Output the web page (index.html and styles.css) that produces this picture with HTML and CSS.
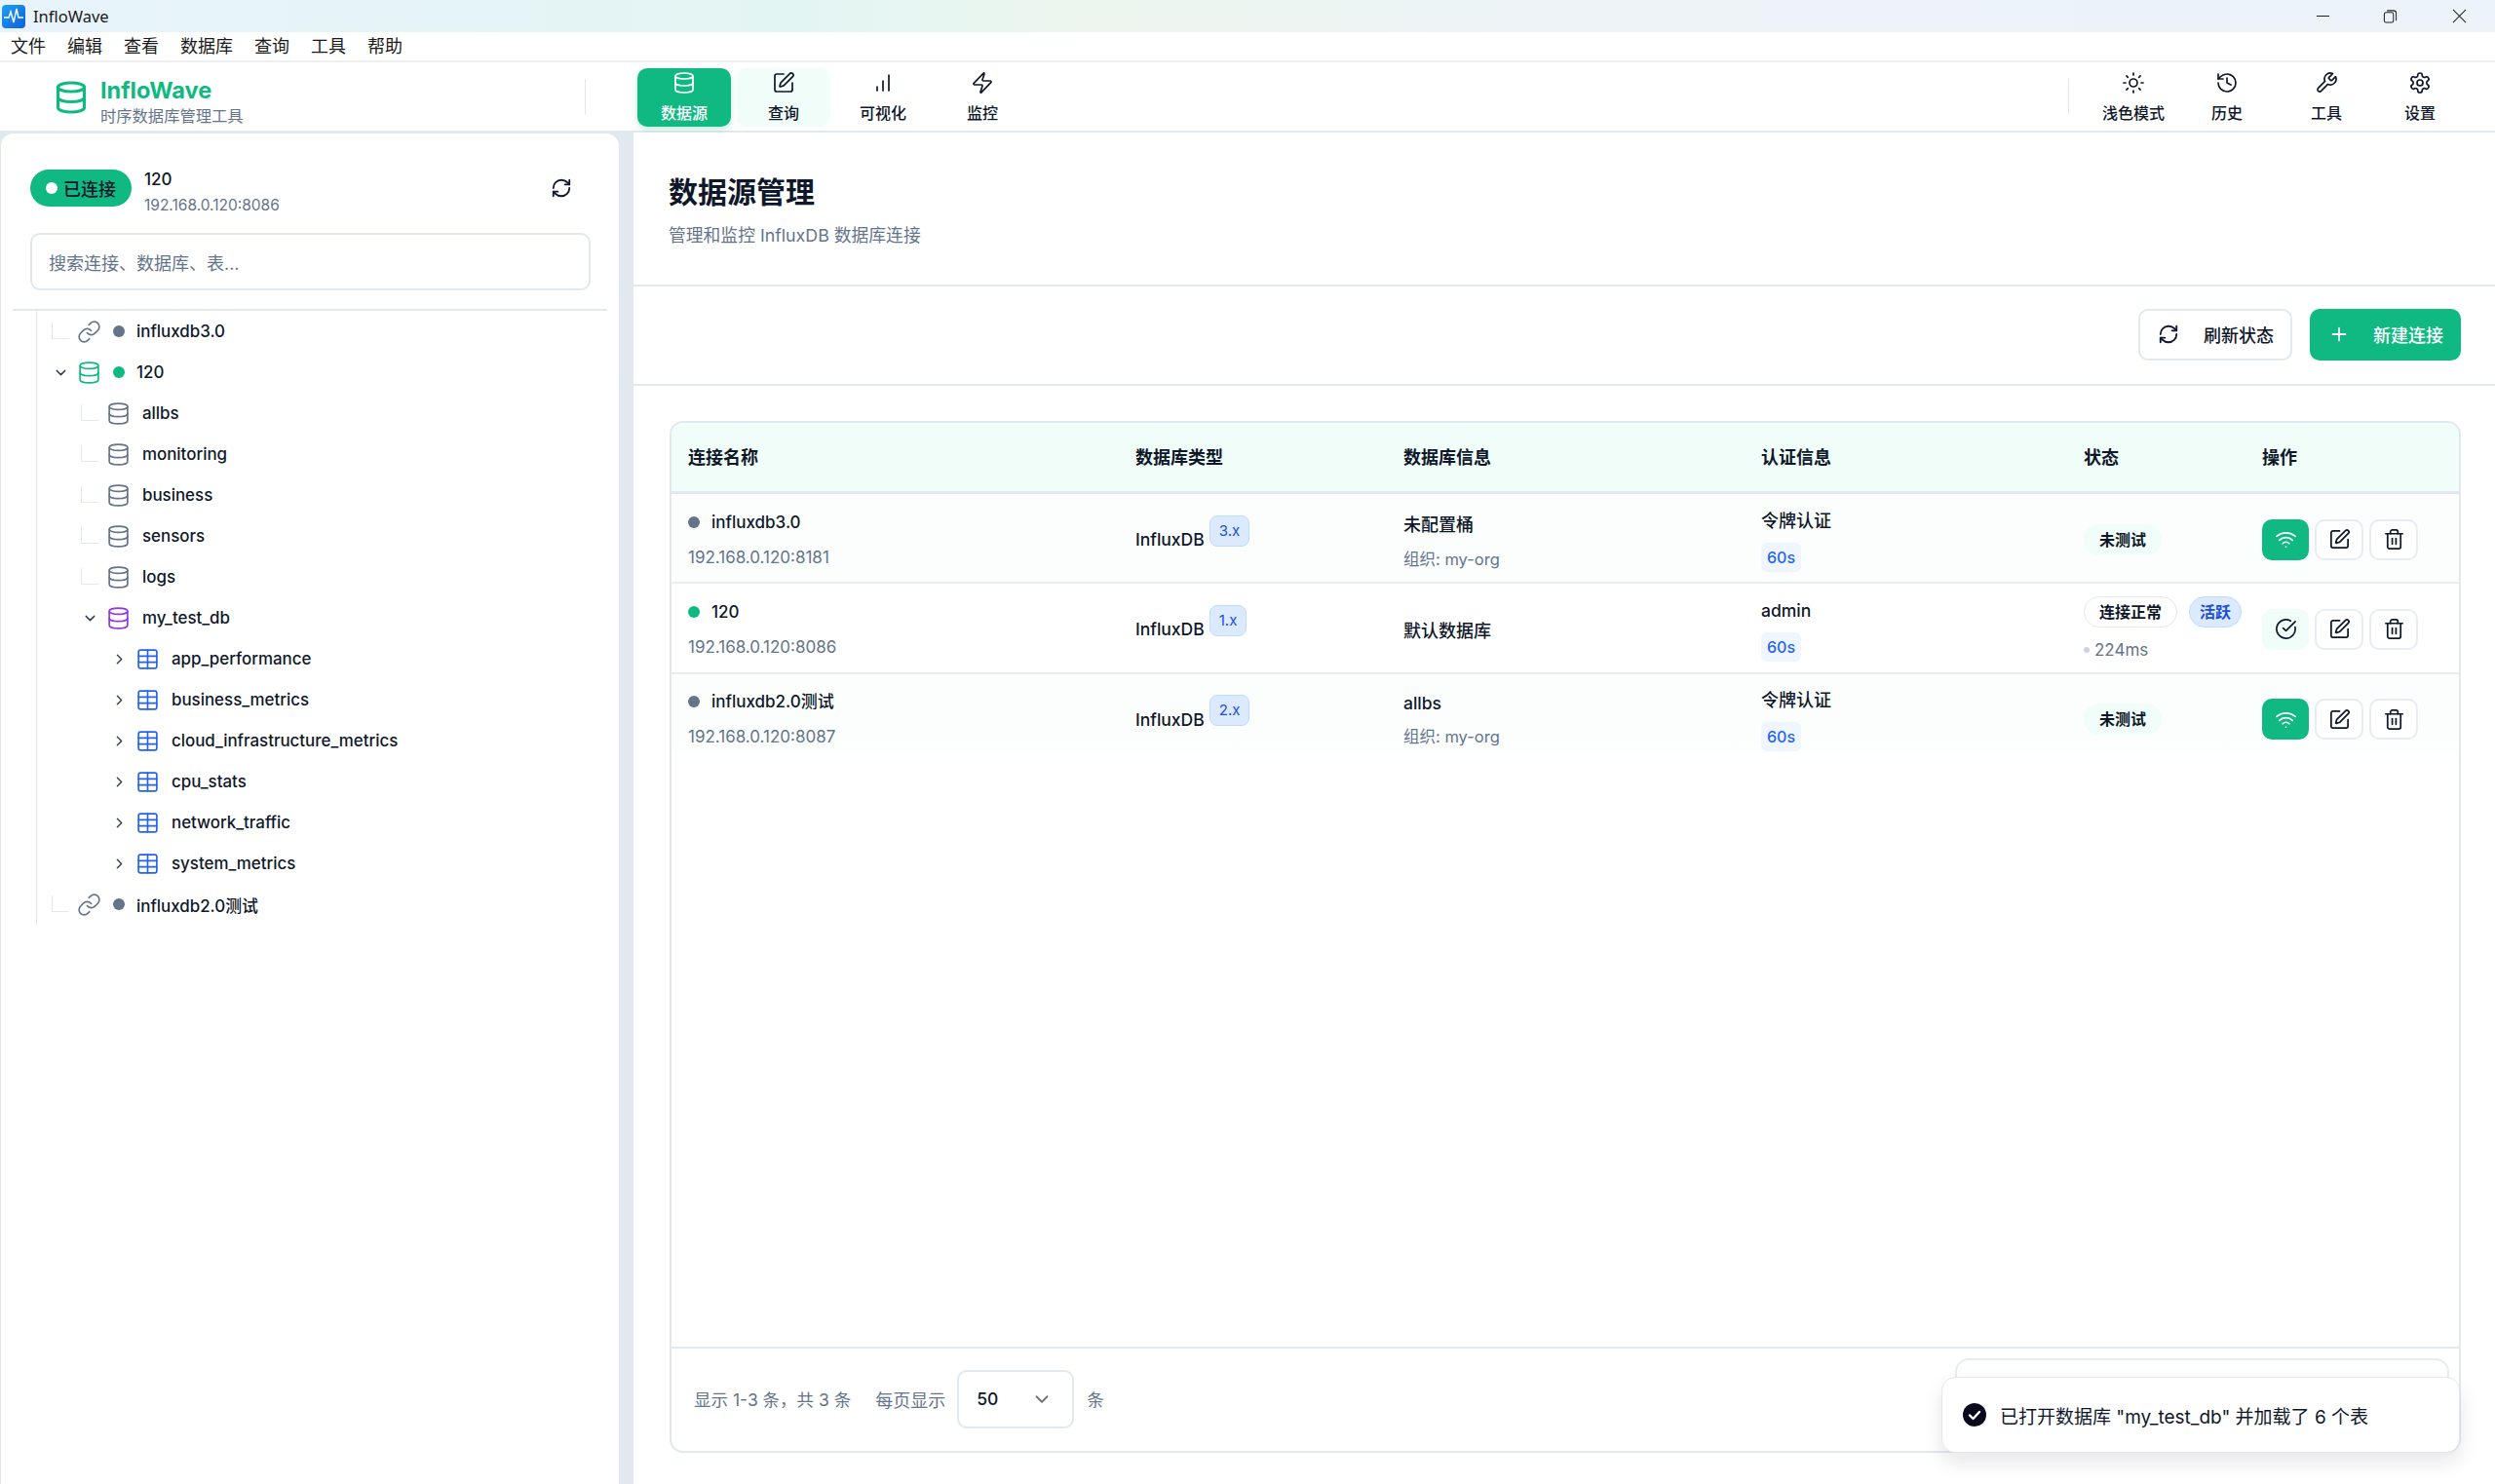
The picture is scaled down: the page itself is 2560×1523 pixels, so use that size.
FILE: index.html
```html
<!DOCTYPE html>
<html lang="en">
<head>
<meta charset="UTF-8">
<meta name="viewport" content="width=device-width, initial-scale=1.0">
<title>InfloWave</title>
<link rel="stylesheet" href="styles.css">
</head>
<body>
  <!-- icon sprites -->
  <svg class="sprites" aria-hidden="true">
    <symbol id="i-db" viewBox="0 0 24 24"><ellipse cx="12" cy="5" rx="9" ry="3"/><path d="M3 5v14a9 3 0 0 0 18 0V5"/><path d="M3 12a9 3 0 0 0 18 0"/></symbol>
    <symbol id="i-edit" viewBox="0 0 24 24"><path d="M12 3H5a2 2 0 0 0-2 2v14a2 2 0 0 0 2 2h14a2 2 0 0 0 2-2v-7"/><path d="M18.375 2.625a1 1 0 0 1 3 3l-9.013 9.014a2 2 0 0 1-.853.505l-2.873.84a.5.5 0 0 1-.62-.62l.84-2.873a2 2 0 0 1 .506-.852z"/></symbol>
    <symbol id="i-bars" viewBox="0 0 24 24"><path d="M12 20v-10"/><path d="M18 20V4"/><path d="M6 20v-4"/></symbol>
    <symbol id="i-zap" viewBox="0 0 24 24"><path d="M4 14a1 1 0 0 1-.78-1.63l9.9-10.2a.5.5 0 0 1 .86.46l-1.92 6.02A1 1 0 0 0 13 10h7a1 1 0 0 1 .78 1.63l-9.9 10.2a.5.5 0 0 1-.86-.46l1.92-6.02A1 1 0 0 0 11 14z"/></symbol>
    <symbol id="i-sun" viewBox="0 0 24 24"><circle cx="12" cy="12" r="4"/><path d="M12 2v2M12 20v2M4.93 4.93l1.41 1.41M17.66 17.66l1.41 1.41M2 12h2M20 12h2M6.34 17.66l-1.41 1.41M19.07 4.93l-1.41 1.41"/></symbol>
    <symbol id="i-history" viewBox="0 0 24 24"><path d="M3 12a9 9 0 1 0 9-9 9.75 9.75 0 0 0-6.74 2.74L3 8"/><path d="M3 3v5h5"/><path d="M12 7v5l4 2"/></symbol>
    <symbol id="i-wrench" viewBox="0 0 24 24"><path d="M14.7 6.3a1 1 0 0 0 0 1.4l1.6 1.6a1 1 0 0 0 1.4 0l3.77-3.77a6 6 0 0 1-7.94 7.94l-6.91 6.91a2.12 2.12 0 0 1-3-3l6.91-6.91a6 6 0 0 1 7.94-7.94l-3.76 3.76z"/></symbol>
    <symbol id="i-gear" viewBox="0 0 24 24"><path d="M12.22 2h-.44a2 2 0 0 0-2 2v.18a2 2 0 0 1-1 1.73l-.43.25a2 2 0 0 1-2 0l-.15-.08a2 2 0 0 0-2.73.73l-.22.38a2 2 0 0 0 .73 2.73l.15.1a2 2 0 0 1 1 1.72v.51a2 2 0 0 1-1 1.74l-.15.09a2 2 0 0 0-.73 2.73l.22.38a2 2 0 0 0 2.73.73l.15-.08a2 2 0 0 1 2 0l.43.25a2 2 0 0 1 1 1.73V20a2 2 0 0 0 2 2h.44a2 2 0 0 0 2-2v-.18a2 2 0 0 1 1-1.73l.43-.25a2 2 0 0 1 2 0l.15.08a2 2 0 0 0 2.73-.73l.22-.39a2 2 0 0 0-.73-2.73l-.15-.08a2 2 0 0 1-1-1.74v-.5a2 2 0 0 1 1-1.74l.15-.09a2 2 0 0 0 .73-2.73l-.22-.38a2 2 0 0 0-2.73-.73l-.15.08a2 2 0 0 1-2 0l-.43-.25a2 2 0 0 1-1-1.73V4a2 2 0 0 0-2-2z"/><circle cx="12" cy="12" r="3"/></symbol>
    <symbol id="i-refresh" viewBox="0 0 24 24"><path d="M3 12a9 9 0 0 1 9-9 9.75 9.75 0 0 1 6.74 2.74L21 8"/><path d="M21 3v5h-5"/><path d="M21 12a9 9 0 0 1-9 9 9.75 9.75 0 0 1-6.74-2.74L3 16"/><path d="M8 16H3v5"/></symbol>
    <symbol id="i-wifi" viewBox="0 0 24 24"><path d="M12 20h.01"/><path d="M2 8.82a15 15 0 0 1 20 0"/><path d="M5 12.859a10 10 0 0 1 14 0"/><path d="M8.5 16.429a5 5 0 0 1 7 0"/></symbol>
    <symbol id="i-trash" viewBox="0 0 24 24"><path d="M3 6h18"/><path d="M19 6v14c0 1-1 2-2 2H7c-1 0-2-1-2-2V6"/><path d="M8 6V4c0-1 1-2 2-2h4c1 0 2 1 2 2v2"/><path d="M10 11v6"/><path d="M14 11v6"/></symbol>
    <symbol id="i-check" viewBox="0 0 24 24"><path d="M21.801 10A10 10 0 1 1 17 3.335"/><path d="m9 11 3 3L22 4"/></symbol>
    <symbol id="i-link" viewBox="0 0 24 24"><path d="M10 13a5 5 0 0 0 7.54.54l3-3a5 5 0 0 0-7.07-7.07l-1.72 1.71"/><path d="M14 11a5 5 0 0 0-7.54-.54l-3 3a5 5 0 0 0 7.07 7.07l1.71-1.71"/></symbol>
    <symbol id="i-table" viewBox="0 0 24 24"><rect x="3" y="3" width="18" height="18" rx="2"/><path d="M12 3v18M3 9h18M3 15h18"/></symbol>
    <symbol id="i-plus" viewBox="0 0 24 24"><path d="M5 12h14M12 5v14"/></symbol>
    <symbol id="i-down" viewBox="0 0 24 24"><path d="m6 9 6 6 6-6"/></symbol>
    <symbol id="i-right" viewBox="0 0 24 24"><path d="m9 18 6-6-6-6"/></symbol>
  </svg>

  <!-- Window title bar -->
  <div class="titlebar">
    <div class="app-icon">
      <svg viewBox="0 0 24 24"><path d="M2 13h5l2-6 3 11 3-14 2 9h5"/></svg>
    </div>
    <span class="app-title">InfloWave</span>
    <div class="win-controls">
      <svg class="win-btn" viewBox="0 0 16 16"><path d="M1 8h14"/></svg>
      <svg class="win-btn" viewBox="0 0 16 16"><rect x="1.5" y="4" width="10" height="11" rx="2"/><path d="M4.5 2h7a3 3 0 0 1 3 3v8"/></svg>
      <svg class="win-btn close" viewBox="0 0 16 16"><path d="M1 1l14 14M15 1L1 15"/></svg>
    </div>
  </div>

  <!-- Menu -->
  <div class="menubar">
    <span>文件</span><span>编辑</span><span>查看</span><span>数据库</span><span>查询</span><span>工具</span><span>帮助</span>
  </div>

  <!-- Toolbar -->
  <header class="toolbar">
    <div class="brand">
      <svg class="ic brand-icon"><use href="#i-db"/></svg>
      <div>
        <div class="brand-name">InfloWave</div>
        <div class="brand-sub">时序数据库管理工具</div>
      </div>
    </div>
    <div class="tool-divider"></div>
    <nav class="nav-main">
      <a class="nav-btn active"><svg class="ic"><use href="#i-db"/></svg>数据源</a>
      <a class="nav-btn soft"><svg class="ic"><use href="#i-edit"/></svg>查询</a>
      <a class="nav-btn"><svg class="ic"><use href="#i-bars"/></svg>可视化</a>
      <a class="nav-btn"><svg class="ic"><use href="#i-zap"/></svg>监控</a>
    </nav>
    <div class="tool-divider right"></div>
    <nav class="nav-side">
      <a class="nav-btn"><svg class="ic"><use href="#i-sun"/></svg>浅色模式</a>
      <a class="nav-btn"><svg class="ic"><use href="#i-history"/></svg>历史</a>
      <a class="nav-btn tools"><svg class="ic"><use href="#i-wrench"/></svg>工具</a>
      <a class="nav-btn"><svg class="ic"><use href="#i-gear"/></svg>设置</a>
    </nav>
  </header>

  <div class="workspace">
    <!-- Connection tree -->
    <aside class="sidebar">
      <div class="conn-row">
        <span class="conn-badge"><i></i>已连接</span>
        <div class="conn-meta">
          <div class="conn-name">120</div>
          <div class="conn-addr">192.168.0.120:8086</div>
        </div>
        <svg class="ic conn-refresh"><use href="#i-refresh"/></svg>
      </div>
      <div class="search">搜索连接、数据库、表...</div>

      <div class="tree-wrap">
        <div class="tree">
          <div class="node lv0"><span class="stub"></span><svg class="ic gray"><use href="#i-link"/></svg><i class="dot off"></i><span class="label">influxdb3.0</span></div>
          <div class="node lv0"><span class="toggle"><svg class="ic"><use href="#i-down"/></svg></span><svg class="ic green"><use href="#i-db"/></svg><i class="dot on"></i><span class="label">120</span></div>
          <div class="node lv1"><span class="stub"></span><svg class="ic gray"><use href="#i-db"/></svg><span class="label">allbs</span></div>
          <div class="node lv1"><span class="stub"></span><svg class="ic gray"><use href="#i-db"/></svg><span class="label">monitoring</span></div>
          <div class="node lv1"><span class="stub"></span><svg class="ic gray"><use href="#i-db"/></svg><span class="label">business</span></div>
          <div class="node lv1"><span class="stub"></span><svg class="ic gray"><use href="#i-db"/></svg><span class="label">sensors</span></div>
          <div class="node lv1"><span class="stub"></span><svg class="ic gray"><use href="#i-db"/></svg><span class="label">logs</span></div>
          <div class="node lv1"><span class="toggle"><svg class="ic"><use href="#i-down"/></svg></span><svg class="ic purple"><use href="#i-db"/></svg><span class="label">my_test_db</span></div>
          <div class="node lv2"><span class="toggle"><svg class="ic"><use href="#i-right"/></svg></span><svg class="ic blue"><use href="#i-table"/></svg><span class="label">app_performance</span></div>
          <div class="node lv2"><span class="toggle"><svg class="ic"><use href="#i-right"/></svg></span><svg class="ic blue"><use href="#i-table"/></svg><span class="label">business_metrics</span></div>
          <div class="node lv2"><span class="toggle"><svg class="ic"><use href="#i-right"/></svg></span><svg class="ic blue"><use href="#i-table"/></svg><span class="label">cloud_infrastructure_metrics</span></div>
          <div class="node lv2"><span class="toggle"><svg class="ic"><use href="#i-right"/></svg></span><svg class="ic blue"><use href="#i-table"/></svg><span class="label">cpu_stats</span></div>
          <div class="node lv2"><span class="toggle"><svg class="ic"><use href="#i-right"/></svg></span><svg class="ic blue"><use href="#i-table"/></svg><span class="label">network_traffic</span></div>
          <div class="node lv2"><span class="toggle"><svg class="ic"><use href="#i-right"/></svg></span><svg class="ic blue"><use href="#i-table"/></svg><span class="label">system_metrics</span></div>
          <div class="node lv0"><span class="stub"></span><svg class="ic gray"><use href="#i-link"/></svg><i class="dot off"></i><span class="label">influxdb2.0测试</span></div>
        </div>
      </div>
    </aside>

    <!-- Data source page -->
    <main class="content">
      <div class="page-head">
        <h1>数据源管理</h1>
        <p>管理和监控 InfluxDB 数据库连接</p>
      </div>
      <div class="page-actions">
        <button class="btn"><svg class="ic"><use href="#i-refresh"/></svg>刷新状态</button>
        <button class="btn primary"><svg class="ic"><use href="#i-plus"/></svg>新建连接</button>
      </div>

      <div class="table-area">
        <div class="table-card">
          <div class="grid thead">
            <div class="cell">连接名称</div>
            <div class="cell">数据库类型</div>
            <div class="cell">数据库信息</div>
            <div class="cell">认证信息</div>
            <div class="cell">状态</div>
            <div class="cell">操作</div>
          </div>

          <div class="tbody">
            <div class="grid row tint first">
              <div class="cell stack">
                <div class="name"><i class="dot off"></i>influxdb3.0</div>
                <div class="muted">192.168.0.120:8181</div>
              </div>
              <div class="cell"><div class="db-type">InfluxDB<span class="ver">3.x</span></div></div>
              <div class="cell stack info">
                <div class="zh">未配置桶</div>
                <div class="muted">组织: my-org</div>
              </div>
              <div class="cell stack">
                <div class="auth zh">令牌认证</div>
                <span class="timeout">60s</span>
              </div>
              <div class="cell"><span class="pill soft">未测试</span></div>
              <div class="cell ops">
                <button class="op primary"><svg class="ic"><use href="#i-wifi"/></svg></button>
                <button class="op"><svg class="ic"><use href="#i-edit"/></svg></button>
                <button class="op"><svg class="ic"><use href="#i-trash"/></svg></button>
              </div>
            </div>

            <div class="grid row tall">
              <div class="cell stack">
                <div class="name"><i class="dot on"></i>120</div>
                <div class="muted">192.168.0.120:8086</div>
              </div>
              <div class="cell"><div class="db-type">InfluxDB<span class="ver">1.x</span></div></div>
              <div class="cell zh">默认数据库</div>
              <div class="cell stack">
                <div class="auth">admin</div>
                <span class="timeout">60s</span>
              </div>
              <div class="cell stack status">
                <div class="pills"><span class="pill outline">连接正常</span><span class="pill active">活跃</span></div>
                <div class="latency muted"><i></i>224ms</div>
              </div>
              <div class="cell ops">
                <button class="op mint"><svg class="ic"><use href="#i-check"/></svg></button>
                <button class="op"><svg class="ic"><use href="#i-edit"/></svg></button>
                <button class="op"><svg class="ic"><use href="#i-trash"/></svg></button>
              </div>
            </div>

            <div class="grid row tint fade">
              <div class="cell stack">
                <div class="name"><i class="dot off"></i>influxdb2.0测试</div>
                <div class="muted">192.168.0.120:8087</div>
              </div>
              <div class="cell"><div class="db-type">InfluxDB<span class="ver">2.x</span></div></div>
              <div class="cell stack info">
                <div>allbs</div>
                <div class="muted">组织: my-org</div>
              </div>
              <div class="cell stack">
                <div class="auth zh">令牌认证</div>
                <span class="timeout">60s</span>
              </div>
              <div class="cell"><span class="pill soft">未测试</span></div>
              <div class="cell ops">
                <button class="op primary"><svg class="ic"><use href="#i-wifi"/></svg></button>
                <button class="op"><svg class="ic"><use href="#i-edit"/></svg></button>
                <button class="op"><svg class="ic"><use href="#i-trash"/></svg></button>
              </div>
            </div>
          </div>

          <div class="pager">
            <span>显示 1-3 条，共 3 条</span>
            <span class="per-page">每页显示</span>
            <div class="select">50<svg class="ic"><use href="#i-down"/></svg></div>
            <span>条</span>
            <div class="pager-nav"></div>
          </div>
        </div>
      </div>
    </main>
  </div>

  <!-- Toast -->
  <div class="toast">
    <svg class="toast-icon" viewBox="0 0 24 24"><circle cx="12" cy="12" r="12"/><path d="m7 12.5 3.5 3.5L17 9"/></svg>
    已打开数据库 "my_test_db" 并加载了 6 个表
  </div>
</body>
</html>
```

FILE: styles.css
```css
* {
  box-sizing: border-box;
}

body {
  margin: 0;
  height: 1523px;
  overflow: hidden;
  position: relative;
  font-family: Inter, "Noto Sans CJK SC", sans-serif;
  font-size: 17.5px;
  color: #0f172a;
  background: #fff;
}

.sprites {
  display: none;
}

.ic {
  display: block;
  width: 22px;
  height: 22px;
  fill: none;
  stroke: currentColor;
  stroke-width: 2;
  stroke-linecap: round;
  stroke-linejoin: round;
  flex: none;
}

/* title bar */
.titlebar {
  height: 33px;
  display: flex;
  align-items: center;
  background: linear-gradient(90deg, #e8f3fb 0%, #e3f5f3 32%, #ecf6ee 44%, #edf3f7 62%, #ecf3f9 100%);
}

.app-icon {
  width: 24px;
  height: 24px;
  margin-left: 2px;
  border-radius: 4px;
  background: linear-gradient(135deg, #1ea0f5, #0b62d8);
}

.app-icon svg {
  width: 24px;
  height: 24px;
  fill: none;
  stroke: #fff;
  stroke-width: 1.4;
}

.app-title {
  margin-left: 8px;
  font-family: "Noto Sans", sans-serif;
  font-size: 16.5px;
  color: #1a1a1a;
}

.win-controls {
  margin-left: auto;
  display: flex;
  gap: 54px;
  margin-right: 29px;
}

.win-btn {
  width: 15px;
  height: 15px;
  fill: none;
  stroke: #222;
  stroke-width: 1.1;
}

.win-btn.close {
  margin-left: 2px;
}

/* menu */
.menubar {
  height: 31px;
  padding: 0 0 3px 11px;
  display: flex;
  gap: 22px;
  align-items: center;
  font-size: 18px;
  color: #1a1a1a;
  border-bottom: 2px solid #f0f0f0;
}

/* toolbar */
.toolbar {
  height: 72px;
  padding-top: 2px;
  display: flex;
  align-items: center;
  border-bottom: 2px solid #e2e8f0;
}

.brand {
  width: 600px;
  padding-left: 55px;
  display: flex;
  align-items: center;
  gap: 12px;
}

.brand-icon {
  width: 36px;
  height: 36px;
  color: #10b981;
  stroke-width: 2.1;
}

.brand-name {
  margin-top: 8px;
  font-size: 23.5px;
  font-weight: 700;
  line-height: 30px;
  color: #10b981;
}

.brand-sub {
  font-size: 16.3px;
  line-height: 22px;
  color: #64748b;
}

.tool-divider {
  width: 1px;
  height: 36px;
  margin-bottom: 2px;
  background: #e2e8f0;
}

.tool-divider.right {
  margin-left: auto;
}

.nav-main {
  margin-left: 53px;
  display: flex;
  gap: 6px;
}

.nav-side {
  margin-left: 18px;
  margin-right: 29px;
  display: flex;
}

.nav-btn {
  width: 96px;
  height: 60px;
  padding-top: 3px;
  border-radius: 10px;
  display: flex;
  flex-direction: column;
  align-items: center;
  gap: 8px;
  font-size: 16px;
  font-weight: 500;
  line-height: 22px;
  color: #0f172a;
}

.nav-btn .ic {
  width: 24px;
  height: 24px;
  stroke-width: 1.7;
}

.nav-btn.active {
  background: #10b981;
  color: #fff;
  box-shadow: 0 3px 6px rgba(16, 185, 129, 0.25);
}

.nav-btn.soft {
  background: #f0fdf8;
}

.nav-btn.tools {
  margin-left: 6px;
}

/* main layout */
.workspace {
  height: 1387px;
  display: flex;
  background: #e2e8f0;
}

.sidebar {
  width: 636px;
  background: #fff;
  border: 1px solid #e2e8f0;
  border-bottom: 0;
  border-radius: 14px 14px 0 0;
  padding-top: 32px;
}

.conn-row {
  height: 52px;
  margin: 0 30px 0 30px;
  display: flex;
  align-items: center;
}

.conn-badge {
  width: 104px;
  height: 38px;
  margin-bottom: 4px;
  border-radius: 19px;
  background: #10b981;
  color: #0f172a;
  font-size: 18px;
  font-weight: 500;
  display: flex;
  align-items: center;
  justify-content: center;
  gap: 6px;
}

.conn-badge i {
  width: 12px;
  height: 12px;
  border-radius: 50%;
  background: #fff;
}

.conn-meta {
  margin-top: 4px;
  margin-left: 13px;
}

.conn-name {
  font-size: 17px;
  font-weight: 500;
  line-height: 26px;
}

.conn-addr {
  margin-top: 1px;
  font-size: 15.5px;
  line-height: 26px;
  color: #64748b;
}

.conn-refresh {
  margin-left: auto;
  margin-right: 18px;
  margin-bottom: 4px;
}

.search {
  height: 59px;
  margin: 18px 29px 0 30px;
  padding-left: 17px;
  border: 2px solid #e2e8f0;
  border-radius: 10px;
  display: flex;
  align-items: center;
  font-size: 18px;
  color: #64748b;
}

.tree-wrap {
  margin: 19px 12px 0 12px;
  border-top: 2px solid #e2e8f0;
  padding-left: 24px;
}

.tree {
  border-left: 1px solid #e2e8f0;
}

.node {
  height: 42px;
  display: flex;
  align-items: center;
  gap: 10px;
  font-weight: 500;
  font-size: 16.9px;
}

.lv0 {
  padding-left: 15px;
}

.lv1 {
  padding-left: 45px;
}

.lv2 {
  padding-left: 75px;
}

.node .label {
  margin-left: 4px;
}

.lv0 .label {
  margin-left: 2px;
}

.stub {
  width: 18px;
  height: 17px;
  align-self: flex-start;
  margin-top: 12px;
  border-left: 1px solid #e2e8f0;
  border-bottom: 1px solid #e2e8f0;
}

.toggle {
  width: 18px;
  display: flex;
  justify-content: center;
  color: #334155;
}

.toggle .ic {
  width: 17px;
  height: 17px;
}

.node > .ic {
  width: 25px;
  height: 25px;
  margin: 0 -2px;
  stroke-width: 1.6;
}

.gray {
  color: #64748b;
}

.green {
  color: #10b981;
}

.purple {
  color: #9333ea;
}

.blue {
  color: #2563eb;
}

.dot {
  width: 12px;
  height: 12px;
  border-radius: 50%;
  flex: none;
  display: block;
}

.node .dot {
  margin-left: 4px;
}

.dot.off {
  background: #64748b;
}

.dot.on {
  background: #10b981;
}

/* content */
.content {
  flex: 1;
  margin-left: 14px;
  background: #fff;
  display: flex;
  flex-direction: column;
  position: relative;
}

.page-head {
  height: 158px;
  padding: 40px 0 0 36px;
  border-bottom: 2px solid #e2e8f0;
}

.page-head h1 {
  margin: 0;
  font-size: 30px;
  font-weight: 700;
  line-height: 42px;
}

.page-head p {
  margin: 11px 0 0;
  font-size: 17.8px;
  line-height: 26px;
  color: #64748b;
}

.page-actions {
  height: 102px;
  padding: 0 35px 2px 0;
  border-bottom: 2px solid #e2e8f0;
  display: flex;
  align-items: center;
  justify-content: flex-end;
  gap: 18px;
}

.btn {
  width: 158px;
  height: 53px;
  padding: 0 17px 0 18px;
  border: 2px solid #e2e8f0;
  border-radius: 10px;
  background: #fff;
  font: inherit;
  font-size: 18px;
  font-weight: 500;
  color: #0f172a;
  display: flex;
  align-items: center;
  justify-content: space-between;
}

.btn.primary {
  width: 155px;
  padding: 0 16px 0 17px;
  border-color: #10b981;
  background: #10b981;
  color: #fff;
}

.table-area {
  flex: 1;
  padding: 36px 35px 32px 37px;
  display: flex;
}

.table-card {
  flex: 1;
  border: 2px solid #e2e8f0;
  border-radius: 14px;
  display: flex;
  flex-direction: column;
  overflow: hidden;
}

.grid {
  display: grid;
  grid-template-columns: 457px 275px 367px 331px 183px 1fr;
  align-items: center;
}

.cell {
  padding-left: 19px;
}

.cell:first-child {
  padding-left: 17px;
}

.thead {
  height: 73px;
  padding-bottom: 3px;
  background: #f0fdf8;
  border-bottom: 3px solid #e2e8f0;
  font-size: 18px;
  font-weight: 700;
}

.tbody {
  flex: 1;
}

.row {
  height: 92px;
  border-bottom: 2px solid #e8edf4;
  font-weight: 500;
}

.row.first {
  padding-top: 3px;
}

.row.tall {
  height: 93px;
  padding-top: 2px;
}

.row.tint {
  background: #fbfefd;
}

.row.fade {
  border-bottom: 0;
  background: linear-gradient(#fbfefd 70%, #fff);
}

.zh {
  font-size: 18px;
}

.stack {
  display: flex;
  flex-direction: column;
  align-items: flex-start;
  gap: 8px;
}

.stack.info {
  padding-top: 5px;
  gap: 10px;
}

.name {
  display: flex;
  align-items: center;
  gap: 12px;
  font-size: 17px;
  line-height: 28px;
}

.muted {
  font-size: 17px;
  font-weight: 400;
  line-height: 28px;
  color: #64748b;
}

.info .muted {
  font-size: 16.5px;
}

.db-type {
  display: flex;
  align-items: center;
  gap: 5px;
}

.ver {
  height: 32px;
  padding: 0 9px;
  margin-bottom: 18px;
  border: 1px solid #bfdbfe;
  border-radius: 8px;
  background: #dbeafe;
  color: #1d4ed8;
  font-size: 15px;
  font-weight: 400;
  line-height: 30px;
}

.auth {
  line-height: 28px;
}

.timeout {
  height: 30px;
  padding: 0 6px;
  border-radius: 6px;
  background: #eff6ff;
  color: #2563eb;
  font-size: 16px;
  line-height: 30px;
}

.pills {
  display: flex;
  gap: 12px;
}

.pill {
  height: 32px;
  padding: 0 15px;
  border-radius: 16px;
  font-size: 16px;
  font-weight: 600;
  line-height: 30px;
  display: inline-block;
  border: 1px solid transparent;
}

.pill.soft {
  background: #f0fdf8;
}

.pill.outline {
  border-color: #e2e8f0;
  background: #fff;
}

.pill.active {
  padding: 0 10px;
  border-color: #bfdbfe;
  background: #dbeafe;
  color: #1d4ed8;
}

.stack.status {
  gap: 10px;
}

.latency {
  display: flex;
  align-items: center;
  gap: 5px;
  line-height: 26px;
}

.latency i {
  width: 6px;
  height: 6px;
  border-radius: 50%;
  background: #cbd5e1;
}

.ops {
  display: flex;
  gap: 6px;
}

.op {
  width: 50px;
  height: 42px;
  padding: 0;
  border: 2px solid #e8edf4;
  border-radius: 10px;
  background: #fff;
  color: #0f172a;
  display: flex;
  align-items: center;
  justify-content: center;
}

.op .ic {
  width: 23px;
  height: 23px;
  stroke-width: 1.8;
}

.op.primary {
  width: 48px;
  border-color: #10b981;
  background: #10b981;
  color: #fff;
}

.op.mint {
  width: 48px;
  border-color: #f0fdf8;
  background: #f0fdf8;
}

.pager {
  height: 107px;
  padding: 0 10px 2px 23px;
  border-top: 2px solid #e2e8f0;
  display: flex;
  align-items: center;
  font-size: 17.5px;
  color: #64748b;
}

.per-page {
  margin-left: 25px;
  font-size: 18px;
}

.select {
  width: 120px;
  height: 60px;
  margin: 0 13px 0 12px;
  padding: 0 20px 0 18px;
  border: 2px solid #e2e8f0;
  border-radius: 10px;
  display: flex;
  align-items: center;
  justify-content: space-between;
  color: #0f172a;
  font-weight: 500;
}

.select .ic {
  color: #71717a;
}

.pager-nav {
  margin-left: auto;
  width: 507px;
  height: 84px;
  border: 2px solid #e8edf4;
  border-radius: 14px;
}

/* toast */
.toast {
  position: absolute;
  right: 36px;
  bottom: 32px;
  width: 532px;
  height: 78px;
  padding-left: 21px;
  border: 1px solid #e2e8f0;
  border-radius: 14px;
  background: #fff;
  box-shadow: 0 10px 20px rgba(15, 23, 42, 0.1);
  display: flex;
  align-items: center;
  gap: 14px;
  font-size: 19px;
  font-weight: 400;
}

.toast-icon {
  width: 24px;
  height: 24px;
}

.toast-icon circle {
  fill: #0a0a1e;
}

.toast-icon path {
  fill: none;
  stroke: #fff;
  stroke-width: 2.4;
  stroke-linecap: round;
  stroke-linejoin: round;
}
```
